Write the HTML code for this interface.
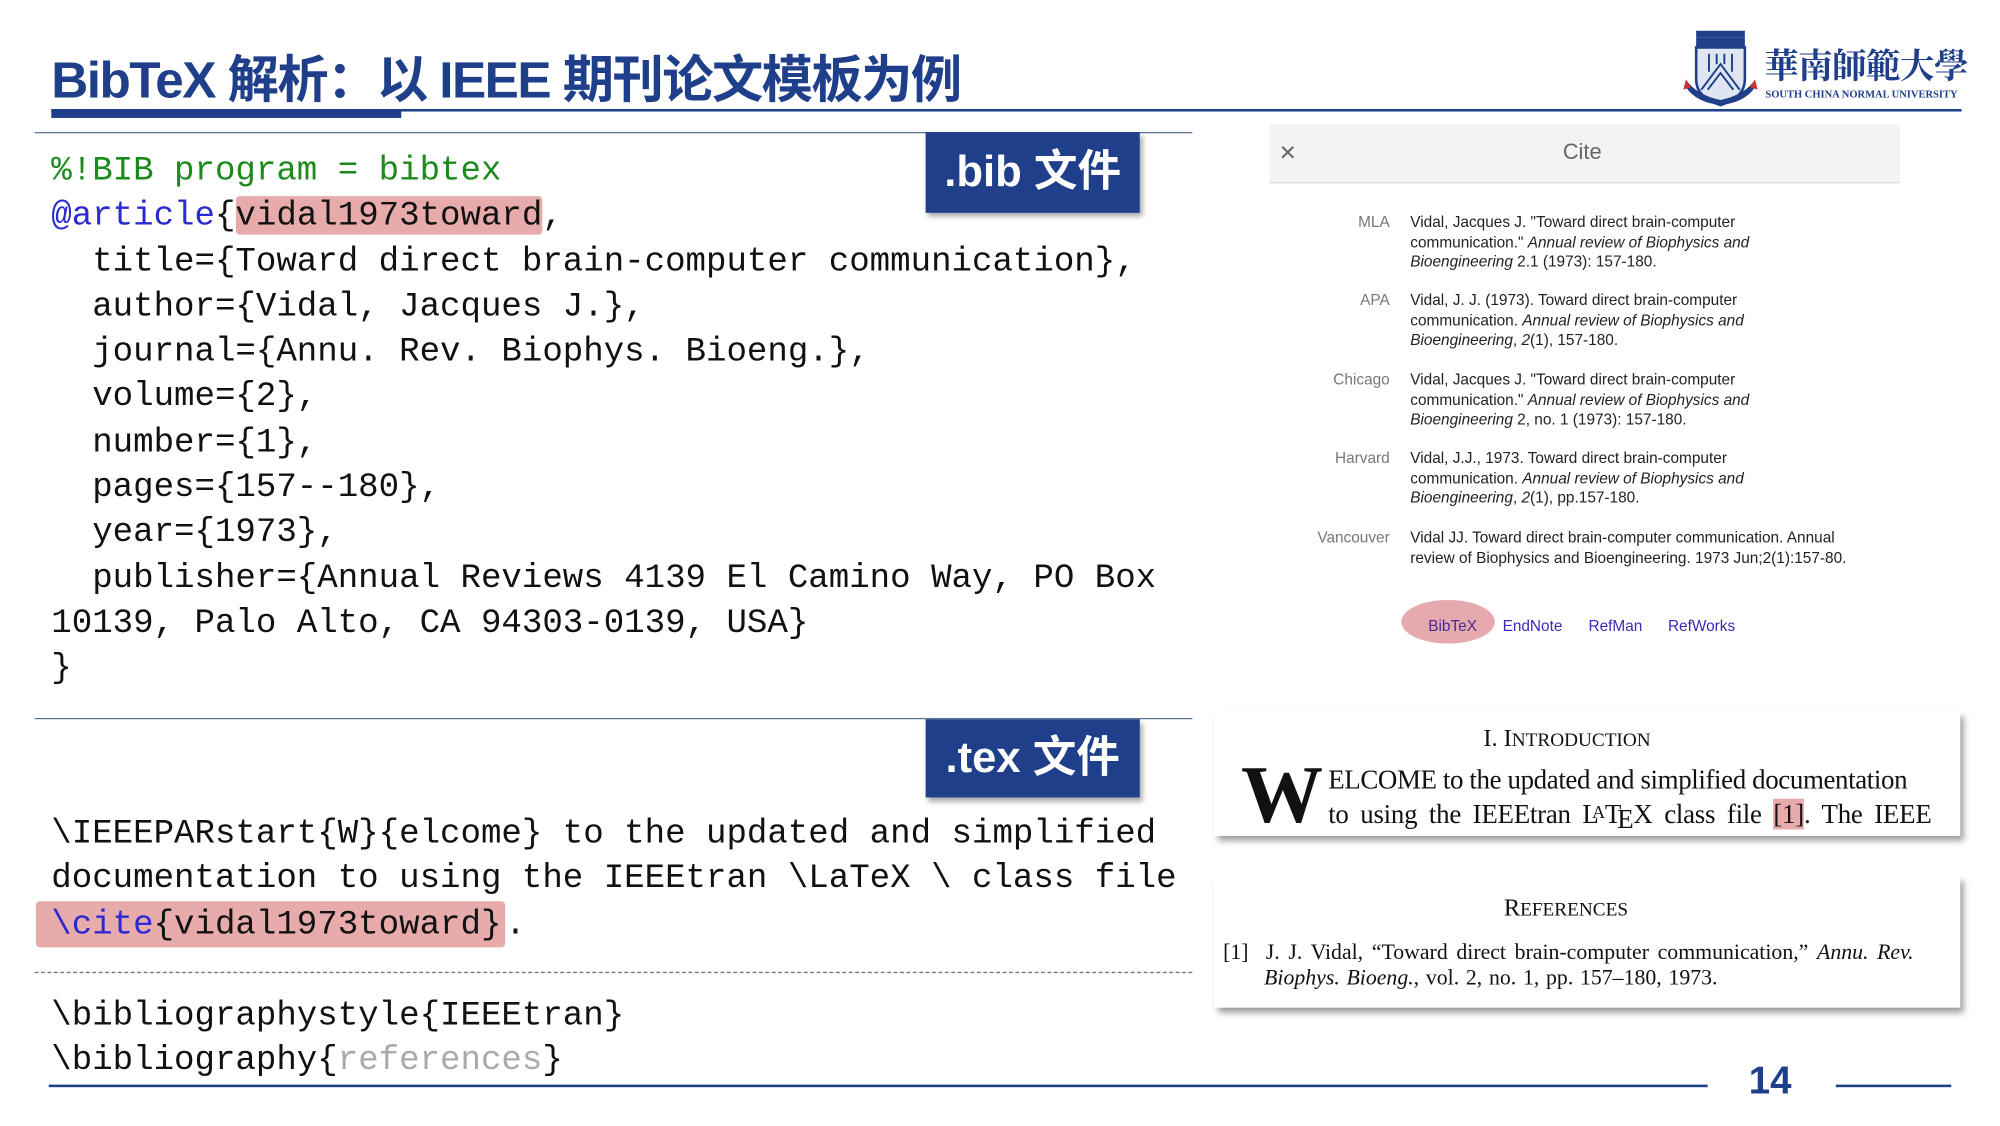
<!DOCTYPE html>
<html><head><meta charset="utf-8"><style>
html,body{margin:0;padding:0;background:#fff;}
body{width:2000px;height:1125px;overflow:hidden;position:relative;}
#s{position:absolute;left:0;top:0;width:1560px;height:878px;transform:scale(1.28205);transform-origin:0 0;font-family:"Liberation Sans","Noto Sans CJK SC",sans-serif;}
.a{position:absolute;}
.code{font-family:"Liberation Mono","Noto Sans CJK SC",monospace;font-size:26.6px;color:#111;white-space:pre;line-height:35.3px;}
.hl{background:#e8abab;border-radius:3px;}
.badge{background:#1f3f8a;color:#fff;font-weight:bold;font-size:34px;text-align:center;box-shadow:2px 3px 4px rgba(0,0,0,.35);font-family:"Liberation Sans","Noto Sans CJK SC",sans-serif;}
.lab{position:absolute;left:994px;width:90px;text-align:right;color:#777;font-size:12px;}
.ent{position:absolute;left:1100px;width:285px;color:#222;font-size:12px;line-height:15.5px;}
.ser{font-family:"Liberation Serif",serif;color:#111;}
.box{position:absolute;background:#fff;box-shadow:3px 4px 5px rgba(0,0,0,.4);}
</style></head><body><div id="s">
<div class="a" style="left:40px;top:30px;font-size:40px;font-weight:bold;color:#1f3f8a;white-space:nowrap;letter-spacing:-1.2px">BibTeX 解析：以 IEEE 期刊论文模板为例</div>
<div class="a" style="left:40px;top:85px;width:1490px;height:2px;background:#1f3f8a"></div>
<div class="a" style="left:40px;top:86px;width:273px;height:6px;background:#1f3f8a"></div>
<svg class="a" style="left:1313px;top:22px" width="58" height="62" viewBox="0 0 58 62">
<rect x="10" y="2" width="38" height="5" fill="#1f3f8a"/><rect x="10" y="7" width="38" height="8" fill="#1f3f8a"/>
<path d="M10 15 H48 V40 Q48 54 29 60 Q10 54 10 40Z" fill="#dfe6f2" stroke="#1f3f8a" stroke-width="2"/>
<path d="M14 48 L29 28 L44 48 M19 48 L29 35 L39 48 M20 20 V34 M38 20 V34 M26 20 V28 M32 20 V28" stroke="#1f3f8a" stroke-width="1.5" fill="none"/>
<path d="M2 40 Q10 52 29 56 Q48 52 56 40 L56 46 Q48 58 29 60 Q10 58 2 46Z" fill="#1f3f8a"/>
<path d="M2 40 L0 48 L6 46Z M56 40 L58 48 L52 46Z" fill="#c33"/>
</svg>
<div class="a" style="left:1376px;top:30px;font-size:27px;color:#1f3f8a;font-family:'Noto Serif CJK SC',serif;font-weight:bold;letter-spacing:-0.5px;white-space:nowrap">華南師範大學</div>
<div class="a" style="left:1377px;top:69px;font-size:8.2px;color:#1f3f8a;font-family:'Liberation Serif',serif;font-weight:bold;white-space:nowrap">SOUTH CHINA NORMAL UNIVERSITY</div>

<div class="a" style="left:27px;top:103px;width:903px;height:1px;background:#5a7896"></div>
<div class="a badge" style="left:722px;top:103px;width:167px;height:63px;line-height:63px">.bib 文件</div>
<div class="a code" style="left:40px;top:116px"><span style="color:#1c8a1c">%!BIB program = bibtex</span>
<span style="color:#2a2ad0">@article</span>{<span class="hl">vidal1973toward</span>,
  title={Toward direct brain-computer communication},
  author={Vidal, Jacques J.},
  journal={Annu. Rev. Biophys. Bioeng.},
  volume={2},
  number={1},
  pages={157--180},
  year={1973},
  publisher={Annual Reviews 4139 El Camino Way, PO Box
10139, Palo Alto, CA 94303-0139, USA}
}</div>

<div class="a" style="left:27px;top:560px;width:903px;height:1px;background:#5a7896"></div>
<div class="a badge" style="left:722px;top:561px;width:167px;height:61px;line-height:61px">.tex 文件</div>
<div class="a code" style="left:40px;top:633px">\IEEEPARstart{W}{elcome} to the updated and simplified
documentation to using the IEEEtran \LaTeX \ class file</div>
<div class="a code" style="left:28px;top:704px"><span class="hl" style="padding:3px 3px 3px 12px"><span style="color:#2a2ad0">\cite</span>{vidal1973toward}</span>.</div>
<div class="a" style="left:27px;top:758px;width:903px;border-top:1px dashed #777"></div>
<div class="a code" style="left:40px;top:775px">\bibliographystyle{IEEEtran}
\bibliography{<span style="color:#aaa">references</span>}</div>

<div class="a" style="left:38px;top:846px;width:1294px;height:2px;background:#1f3f8a"></div>
<div class="a" style="left:1432px;top:846px;width:90px;height:2px;background:#1f3f8a"></div>
<div class="a" style="left:1364px;top:827px;font-size:30px;font-weight:bold;color:#1f3f8a">14</div>

<div class="a" style="left:990px;top:97px;width:492px;height:45px;background:#f3f3f3;border-bottom:1px solid #ddd"></div>
<div class="a" style="left:998px;top:106px;font-size:22px;color:#666;font-weight:300">×</div>
<div class="a" style="left:1219px;top:109px;font-size:17px;color:#666">Cite</div>
<div class="lab" style="top:166px">MLA</div>
<div class="ent" style="top:166px">Vidal, Jacques J. "Toward direct brain-computer communication." <i>Annual review of Biophysics and Bioengineering</i> 2.1 (1973): 157-180.</div>
<div class="lab" style="top:227px">APA</div>
<div class="ent" style="top:227px">Vidal, J. J. (1973). Toward direct brain-computer communication. <i>Annual review of Biophysics and Bioengineering</i>, <i>2</i>(1), 157-180.</div>
<div class="lab" style="top:289px">Chicago</div>
<div class="ent" style="top:289px">Vidal, Jacques J. "Toward direct brain-computer communication." <i>Annual review of Biophysics and Bioengineering</i> 2, no. 1 (1973): 157-180.</div>
<div class="lab" style="top:350px">Harvard</div>
<div class="ent" style="top:350px">Vidal, J.J., 1973. Toward direct brain-computer communication. <i>Annual review of Biophysics and Bioengineering</i>, <i>2</i>(1), pp.157-180.</div>
<div class="lab" style="top:412px">Vancouver</div>
<div class="ent" style="top:412px;width:345px">Vidal JJ. Toward direct brain-computer communication. Annual review of Biophysics and Bioengineering. 1973 Jun;2(1):157-80.</div>
<div class="a" style="left:1093px;top:468px;width:73px;height:34px;border-radius:50%;background:#e6a9b0"></div>
<div class="a" style="left:1114px;top:481px;font-size:12px;color:#4a2a90">BibTeX</div>
<div class="a" style="left:1172px;top:481px;font-size:12px;color:#3a2ab8">EndNote</div>
<div class="a" style="left:1239px;top:481px;font-size:12px;color:#3a2ab8">RefMan</div>
<div class="a" style="left:1301px;top:481px;font-size:12px;color:#3a2ab8">RefWorks</div>

<div class="box" style="left:947px;top:555px;width:582px;height:97px"></div>
<div class="a ser" style="left:1157px;top:566px;font-size:19px;white-space:nowrap">I. I<span style="font-size:15px">NTRODUCTION</span></div>
<div class="a ser" style="left:968px;top:588px;font-size:64px;font-weight:bold;line-height:64px">W</div>
<div class="a ser" style="left:1036px;top:596px;font-size:21px;white-space:nowrap;letter-spacing:-0.3px">ELCOME to the updated and simplified documentation</div>
<div class="a ser" style="left:1036px;top:623px;font-size:21px;white-space:nowrap;word-spacing:4px;letter-spacing:-0.2px">to using the IEEEtran L<span style="font-size:14px;vertical-align:4px;margin-left:-5px">A</span>T<span style="vertical-align:-4px;margin-left:-3px">E</span>X class file <span style="background:#e8abab">[1]</span>. The IEEE</div>

<div class="box" style="left:947px;top:683px;width:582px;height:103px"></div>
<div class="a ser" style="left:1173px;top:698px;font-size:19px;white-space:nowrap">R<span style="font-size:15px">EFERENCES</span></div>
<div class="a ser" style="left:954px;top:733px;font-size:17px;white-space:nowrap;word-spacing:2.5px">[1]&nbsp; J. J. Vidal, “Toward direct brain-computer communication,” <i>Annu. Rev.</i></div>
<div class="a ser" style="left:986px;top:753px;font-size:17px;white-space:nowrap;word-spacing:1px"><i>Biophys. Bioeng.</i>, vol. 2, no. 1, pp. 157–180, 1973.</div>
</div></body></html>
